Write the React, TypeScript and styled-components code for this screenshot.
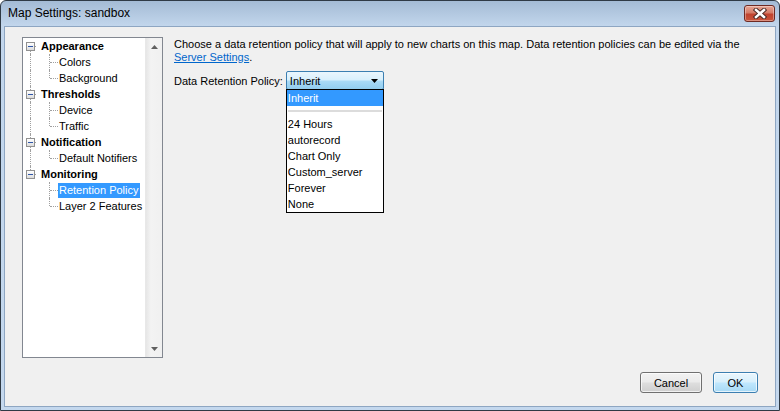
import styled, { createGlobalStyle } from "styled-components";

const GlobalStyle = createGlobalStyle`
  html, body {
    margin: 0;
    padding: 0;
    background: #ffffff;
  }
  body {
    font-family: "Liberation Sans", Arial, sans-serif;
    font-size: 11px;
    color: #000000;
  }
`;

const Window = styled.div`
  box-sizing: border-box;
  width: 780px;
  height: 411px;
  display: flex;
  flex-direction: column;
  border: 1px solid #2f3a45;
  border-radius: 6px 6px 0 0;
  padding: 0 3px 3px 3px;
  background: linear-gradient(#a4bbd5 0, #c2d6ec 25px, #c4d8ee 100%);
  overflow: hidden;
`;

const TitleBar = styled.div`
  height: 25px;
  display: flex;
  align-items: flex-start;
  justify-content: space-between;
  padding: 0 1px 0 4px;
`;

const Title = styled.span`
  font-size: 12px;
  line-height: 25px;
  color: #000000;
`;

const CloseButton = styled.div`
  margin-top: 4px;
  width: 31px;
  height: 17px;
  box-sizing: border-box;
  border: 1px solid #6e2a23;
  border-radius: 3px;
  display: flex;
  align-items: center;
  justify-content: center;
  background: linear-gradient(#e8a594 0, #d47c68 45%, #c0432e 55%, #c9553c 100%);
  box-shadow: inset 0 0 0 1px rgba(255, 255, 255, 0.35);
`;

const Client = styled.div`
  flex: 1;
  display: flex;
  flex-direction: column;
  background: #f0f0f0;
  border: 1px solid #8ea6c2;
`;

const Main = styled.div`
  display: flex;
  align-items: flex-start;
  padding: 10px 17px 0 17px;
`;

const TreePanel = styled.div`
  box-sizing: border-box;
  width: 141px;
  height: 321px;
  border: 1px solid #828790;
  background: #ffffff;
  display: flex;
`;

const TreeList = styled.div`
  flex: 1;
  display: flex;
  flex-direction: column;
`;

const TreeRow = styled.div`
  height: 16px;
  display: flex;
  align-items: center;
`;

const Guide = styled.div<{
  $w: number;
  $x: number;
  $top?: boolean;
  $bottom?: boolean;
  $h?: number;
}>`
  position: relative;
  width: ${(p) => p.$w}px;
  height: 16px;
  flex-shrink: 0;

  &::before {
    content: "";
    display: ${(p) => (p.$top || p.$bottom ? "block" : "none")};
    position: absolute;
    left: ${(p) => p.$x}px;
    top: ${(p) => (p.$top ? 0 : 8)}px;
    bottom: ${(p) => (p.$bottom ? 0 : 8)}px;
    border-left: 1px dotted #a0a0a0;
  }

  &::after {
    content: "";
    display: ${(p) => (p.$h ? "block" : "none")};
    position: absolute;
    top: 8px;
    left: ${(p) => p.$x + 1}px;
    width: ${(p) => p.$h || 0}px;
    border-top: 1px dotted #a0a0a0;
  }
`;

const Expander = styled.div`
  position: absolute;
  left: 3px;
  top: 4px;
  width: 9px;
  height: 9px;
  box-sizing: border-box;
  border: 1px solid #919191;
  background: linear-gradient(#ffffff, #dcdcdc);
  z-index: 1;

  &::after {
    content: "";
    position: absolute;
    left: 1px;
    top: 3px;
    width: 5px;
    height: 1px;
    background: #2f56a8;
  }
`;

const NodeLabel = styled.span<{ $bold?: boolean; $selected?: boolean }>`
  padding: 0 1px;
  line-height: 15px;
  white-space: nowrap;
  font-weight: ${(p) => (p.$bold ? 700 : 400)};
  background: ${(p) => (p.$selected ? "#3399ff" : "transparent")};
  color: ${(p) => (p.$selected ? "#ffffff" : "#000000")};
`;

const ScrollBar = styled.div`
  width: 16px;
  display: flex;
  flex-direction: column;
  justify-content: space-between;
  background: linear-gradient(to right, #e6e6e6, #f3f3f3 30%, #f0f0f0);
  border-left: 1px solid #e8e8e8;
`;

const ScrollArrow = styled.div`
  height: 17px;
  display: flex;
  align-items: center;
  justify-content: center;
`;

const RightPane = styled.div`
  flex: 1;
  padding: 1px 0 0 11px;
`;

const Intro = styled.p`
  margin: 0;
  line-height: 13px;
`;

const Link = styled.a`
  color: #0066cc;
  text-decoration: underline;
`;

const PolicyRow = styled.div`
  display: flex;
  align-items: center;
  margin-top: 7px;
  gap: 3px;
`;

const ComboWrap = styled.div`
  position: relative;
`;

const Combo = styled.div`
  box-sizing: border-box;
  width: 98px;
  height: 19px;
  border: 1px solid #3c7fb1;
  border-radius: 2px;
  display: flex;
  align-items: center;
  justify-content: space-between;
  padding: 0 5px 0 3px;
  background: linear-gradient(#eaf6fd 0, #d9f0fc 45%, #a9daf6 55%, #92cdef 100%);
`;

const DropList = styled.div`
  position: absolute;
  top: 18px;
  left: 0;
  width: 98px;
  box-sizing: border-box;
  border: 1px solid #000000;
  background: #ffffff;
  z-index: 5;
`;

const Option = styled.div<{ $active?: boolean }>`
  height: 16px;
  line-height: 16px;
  padding-left: 1px;
  white-space: nowrap;
  background: ${(p) => (p.$active ? "#3399ff" : "transparent")};
  color: ${(p) => (p.$active ? "#ffffff" : "#000000")};
`;

const Separator = styled.div`
  height: 10px;
  display: flex;
  align-items: center;
  padding: 0 1px;

  &::after {
    content: "";
    flex: 1;
    height: 2px;
    background: #dcdcdc;
  }
`;

const Footer = styled.div`
  margin-top: auto;
  display: flex;
  justify-content: flex-end;
  gap: 11px;
  padding: 0 17px 13px 0;
`;

const Button = styled.button<{ $default?: boolean; $w: number }>`
  box-sizing: border-box;
  width: ${(p) => p.$w}px;
  height: 21px;
  font-family: "Liberation Sans", Arial, sans-serif;
  font-size: 11px;
  color: #000000;
  border-radius: 3px;
  padding: 0;
  border: 1px solid ${(p) => (p.$default ? "#3c7fb1" : "#707070")};
  background: ${(p) =>
    p.$default
      ? "linear-gradient(#eaf6fd 0, #d9f0fc 45%, #bee6fd 55%, #a7d9f5 100%)"
      : "linear-gradient(#f2f2f2 0, #ebebeb 45%, #dddddd 55%, #cfcfcf 100%)"};
  box-shadow: inset 0 0 0 1px rgba(255, 255, 255, 0.7);
`;

const tree = [
  { label: "Appearance", children: ["Colors", "Background"] },
  { label: "Thresholds", children: ["Device", "Traffic"] },
  { label: "Notification", children: ["Default Notifiers"] },
  { label: "Monitoring", children: ["Retention Policy", "Layer 2 Features"] },
];

const options = ["24 Hours", "autorecord", "Chart Only", "Custom_server", "Forever", "None"];

const SELECTED = "Retention Policy";

function Triangle({ down, color = "#606060" }: { down?: boolean; color?: string }) {
  return (
    <svg width="7" height="4" viewBox="0 0 7 4">
      <path d={down ? "M0 0 H7 L3.5 4 Z" : "M0 4 H7 L3.5 0 Z"} fill={color} />
    </svg>
  );
}

function CloseGlyph() {
  return (
    <svg width="14" height="11" viewBox="0 0 14 11">
      <path d="M3 2 L11 9 M11 2 L3 9" stroke="#4a2a25" strokeWidth="4.5" strokeLinecap="square" />
      <path d="M3 2 L11 9 M11 2 L3 9" stroke="#ffffff" strokeWidth="2.5" strokeLinecap="square" />
    </svg>
  );
}

function Tree() {
  return (
    <TreeList>
      {tree.map((node, i) => {
        const first = i === 0;
        const last = i === tree.length - 1;
        return (
          <div key={node.label}>
            <TreeRow>
              <Guide $w={17} $x={7} $top={!first} $bottom={!last} $h={5}>
                <Expander />
              </Guide>
              <NodeLabel $bold>{node.label}</NodeLabel>
            </TreeRow>
            {node.children.map((child, j) => {
              const lastChild = j === node.children.length - 1;
              return (
                <TreeRow key={child}>
                  <Guide $w={17} $x={7} $top={!last} $bottom={!last} />
                  <Guide $w={18} $x={9} $top $bottom={!lastChild} $h={8} />
                  <NodeLabel $selected={child === SELECTED}>{child}</NodeLabel>
                </TreeRow>
              );
            })}
          </div>
        );
      })}
    </TreeList>
  );
}

export default function App() {
  return (
    <>
      <GlobalStyle />
      <Window>
        <TitleBar>
          <Title>Map Settings: sandbox</Title>
          <CloseButton>
            <CloseGlyph />
          </CloseButton>
        </TitleBar>
        <Client>
          <Main>
            <TreePanel>
              <Tree />
              <ScrollBar>
                <ScrollArrow>
                  <Triangle />
                </ScrollArrow>
                <ScrollArrow>
                  <Triangle down />
                </ScrollArrow>
              </ScrollBar>
            </TreePanel>
            <RightPane>
              <Intro>
                Choose a data retention policy that will apply to new charts on this map. Data
                retention policies can be edited via the
                <br />
                <Link href="#">Server Settings</Link>.
              </Intro>
              <PolicyRow>
                <span>Data Retention Policy:</span>
                <ComboWrap>
                  <Combo>
                    <span>Inherit</span>
                    <Triangle down color="#000000" />
                  </Combo>
                  <DropList>
                    <Option $active>Inherit</Option>
                    <Separator />
                    {options.map((o) => (
                      <Option key={o}>{o}</Option>
                    ))}
                  </DropList>
                </ComboWrap>
              </PolicyRow>
            </RightPane>
          </Main>
          <Footer>
            <Button $w={62}>Cancel</Button>
            <Button $w={45} $default>
              OK
            </Button>
          </Footer>
        </Client>
      </Window>
    </>
  );
}
